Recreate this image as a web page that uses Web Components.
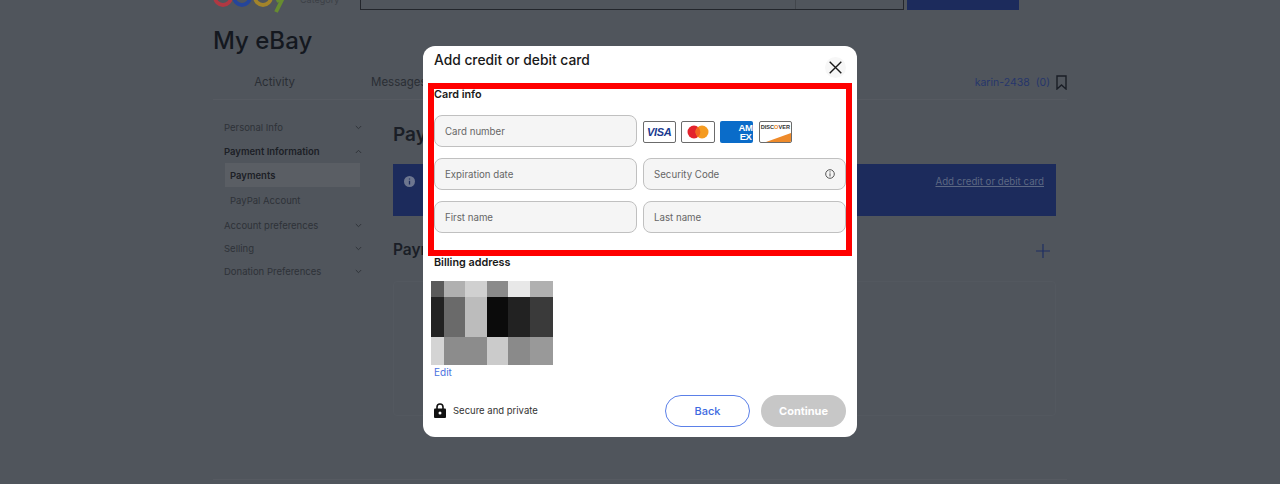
<!DOCTYPE html>
<html>
<head>
<meta charset="utf-8">
<title>My eBay</title>
<style>
  html, body { margin: 0; padding: 0; height: 484px; overflow: hidden; background: #50555c; }
  body { font-family: Inter, "Liberation Sans", sans-serif; }
</style>
</head>
<body>
<my-page>
  <side-nav></side-nav>
</my-page>
<card-modal></card-modal>

<script>
class SideNav extends HTMLElement {
  constructor () {
    super()
    this.attachShadow({mode: 'open'})
  }

  connectedCallback () { this.render() }

  render () {
    const chev = (up) => `<svg width="7" height="5" viewBox="0 0 7 5"><path d="${up ? 'M.8 4 3.5 1.3 6.2 4' : 'M.8 1 3.5 3.7 6.2 1'}" fill="none" stroke="#30343a" stroke-width="1"/></svg>`
    const row = (text, cls, up) => `<div class="row ${cls}"><span>${text}</span>${chev(up)}</div>`
    this.shadowRoot.innerHTML = `<style>
      :host { display: block; width: 137px; font-size: 9.5px; color: #2e3238; }
      .row { display: flex; justify-content: space-between; align-items: center; height: 23.5px; }
      .row svg { margin-right: -1px; }
      .short { height: 23px; }
      .bold { font-weight: 600; color: #1c2026; }
      .sub { height: 24px; padding-left: 5px; margin-left: 1px; margin-right: 1px; display: flex; align-items: center; }
      .on { background: #5a5e64; font-weight: 600; color: #1c2026; margin-bottom: 1px; }
      .last { margin-bottom: 1.5px; }
    </style>
    ${row('Personal Info', '', false)}
    ${row('Payment Information', 'bold', true)}
    <div class="sub on">Payments</div>
    <div class="sub last">PayPal Account</div>
    ${row('Account preferences', '', false)}
    ${row('Selling', 'short', false)}
    ${row('Donation Preferences', 'short', false)}`
  }
}

class MyPage extends HTMLElement {
  constructor () {
    super()
    this.attachShadow({mode: 'open'})
  }

  connectedCallback () { this.render() }

  render () {
    this.shadowRoot.innerHTML = `<style>
      :host { display: block; width: 854px; margin-left: 213px; color: #1a1e26; }
      .top { display: flex; height: 10px; }
      .logo { width: 76px; height: 13px; overflow: hidden; flex: none; }
      .logo svg { display: block; margin-top: -19px; }
      .cat { width: 71px; height: 10px; flex: none; font-size: 9px; line-height: 10px; color: #3c4046; margin-top: -5px; padding-left: 11px; box-sizing: border-box; }
      .search { width: 544px; height: 10px; box-sizing: border-box; border: 1.5px solid #23262c; border-top: 0; flex: none; display: flex; justify-content: flex-end; }
      .search i { width: 107px; border-left: 1px solid #42464c; }
      .go { width: 112px; height: 10px; background: #1c2b5c; margin-left: 3px; flex: none; }
      h1 { margin: 16px 0 0; font-size: 24px; line-height: 30px; font-weight: 500; color: #14181f; }
      .tabs { display: flex; align-items: center; height: 32px; box-sizing: content-box; margin-top: 10px; padding-bottom: 1px; font-size: 11.5px; color: #2a2e34; border-bottom: 1px solid #565a61; }
      .tabs .a { width: 123px; text-align: center; }
      .tabs .m { margin-left: 35px; }
      .tabs .user { margin-left: auto; color: #26366b; font-size: 10.5px; display: flex; align-items: center; gap: 6px; }
      .body { display: flex; margin-top: 16px; }
      .nav { margin-left: 11px; width: 149px; flex: none; }
      .main { flex: 1; min-width: 0; margin-left: 20px; margin-right: 11px; }
      h2 { margin: 7px 0 0; font-size: 19px; line-height: 24px; font-weight: 600; color: #1a1e26; }
      .banner { height: 52px; margin-top: 17px; background: #1c2b5c; display: flex; justify-content: space-between; padding: 12px 12px 0 11px; box-sizing: border-box; font-size: 9.7px; color: #5d6883; }
      .banner u { line-height: 12px; }
      .head { display: flex; justify-content: space-between; align-items: center; margin-top: 22px; }
      .head h2 { margin: 0; font-size: 15.5px; }
      .head svg { margin: 2px 6px 0 0; }
      .list { height: 133px; margin-top: 19px; border: 1px solid #53585f; border-radius: 4px; }
      .foot { border-top: 1px solid #565a61; margin-top: 63px; }
    </style>
    <div class="top">
      <div class="logo"><svg width="76" height="32" viewBox="0 0 76 32"><g fill="none" stroke-width="3.8"><circle cx="10" cy="16" r="8" stroke="#b03842"/><circle cx="29" cy="16" r="8" stroke="#25459a"/><circle cx="50" cy="16" r="8" stroke="#a3842a"/><path d="M60 9l6 12M74 9l-11 22" stroke="#678c30"/></g></svg></div>
      <div class="cat">Category</div>
      <div class="search"><i></i></div>
      <div class="go"></div>
    </div>
    <h1>My eBay</h1>
    <div class="tabs">
      <span class="a">Activity</span>
      <span class="m">Messages</span>
      <span class="user">karin-2438 <span>(0)</span>
        <svg width="11" height="15" viewBox="0 0 11 15"><path d="M1 1h9v13L5.5 10 1 14z" fill="none" stroke="#1a1e26" stroke-width="1.4"/></svg>
      </span>
    </div>
    <div class="body">
      <div class="nav"><slot></slot></div>
      <div class="main">
        <h2>Payments</h2>
        <div class="banner">
          <svg width="11" height="11" viewBox="0 0 11 11"><circle cx="5.5" cy="5.5" r="5.5" fill="#6d768f"/><path d="M5.5 2.4v1.2M5.5 4.8v3.8" stroke="#1c2b5c" stroke-width="1.3"/></svg>
          <u>Add credit or debit card</u>
        </div>
        <div class="head"><h2>Payment methods</h2>
          <svg width="14" height="14" viewBox="0 0 14 14"><path d="M7 0v14M0 7h14" stroke="#1f2f63" stroke-width="1.2"/></svg>
        </div>
        <div class="list"></div>
      </div>
    </div>
    <div class="foot"></div>`
  }
}

class PayCards extends HTMLElement {
  constructor () {
    super()
    this.attachShadow({mode: 'open'})
  }

  connectedCallback () { this.render() }

  render () {
    this.shadowRoot.innerHTML = `<style>
      :host { display: flex; align-items: center; gap: 5.2px; margin: 1px 0 0 -.5px; }
      .c { width: 33.5px; height: 22px; flex: none; box-sizing: border-box; border: 1.5px solid #6b6b6b; border-radius: 2px; background: #fff; display: flex; align-items: center; justify-content: center; font-family: "Liberation Sans", sans-serif; }
      svg { display: block; }
      .visa { font-size: 11px; font-weight: 700; font-style: italic; color: #1a3a8f; letter-spacing: -.3px; }
      .amex { border: 0; background: #0a6cc9; color: #fff; font-size: 9.5px; line-height: 9px; font-weight: 700; letter-spacing: -.5px; justify-content: flex-end; padding-right: 1px; text-align: center; }
      .disc { display: block; position: relative; overflow: hidden; font-size: 5.6px; font-weight: 700; color: #333; text-align: center; line-height: 11px; }
      .disc b { color: #ee8a2a; }
      .disc svg { position: absolute; left: 0; bottom: 0; }
    </style>
    <div class="c visa">VISA</div>
    <div class="c"><svg width="22" height="14" viewBox="0 0 22 14"><circle cx="7" cy="7" r="6.5" fill="#e3222c"/><circle cx="15" cy="7" r="6.5" fill="#f59b20"/><path d="M11 2a6.5 6.5 0 0 1 0 10 6.5 6.5 0 0 1 0-10z" fill="#f2641f"/></svg></div>
    <div class="c amex"><span>AM<br>EX</span></div>
    <div class="c disc">DISC<b>O</b>VER<svg width="31" height="9" viewBox="0 0 31 9"><path d="M31 0v9H6z" fill="#ee8a2a"/></svg></div>`
  }
}

class FormField extends HTMLElement {
  constructor () {
    super()
    this.attachShadow({mode: 'open'})
  }

  connectedCallback () { this.render() }

  render () {
    const info = this.hasAttribute('info')
      ? `<svg width="10" height="10" viewBox="0 0 10 10"><circle cx="5" cy="5" r="4.3" fill="none" stroke="#555" stroke-width="1"/><path d="M5 2.3v1.2M5 4.3v3.2" stroke="#555" stroke-width="1"/></svg>`
      : ''
    this.shadowRoot.innerHTML = `<style>
      :host { display: flex; align-items: center; justify-content: space-between; height: 32px; box-sizing: border-box; padding: 0 10px; background: #f5f5f5; border: 1.5px solid #c0c0c0; border-radius: 8px; font-size: 9.7px; color: #666; }
      span { padding-top: .6px; }
    </style><span><slot></slot></span>${info}`
  }
}

class CardModal extends HTMLElement {
  constructor () {
    super()
    this.attachShadow({mode: 'open'})
  }

  connectedCallback () { this.render() }

  render () {
    const blur = ['#5a5a5a','#b0b0b0','#d0d0d0','#8a8a8a','#e8e8e8','#b0b0b0',
      '#222222','#6a6a6a','#bcbcbc','#0b0b0b','#222222','#3a3a3a',
      '#d4d4d4','#8c8c8c','#8c8c8c','#cbcbcb','#8a8a8a','#999999']
      .map(c => `<i style="background:${c}"></i>`).join('')
    this.shadowRoot.innerHTML = `<style>
      :host { position: fixed; left: 423px; top: 46px; width: 434px; height: 391px; box-sizing: border-box; padding: 0 11px; background: #fff; border-radius: 12px; color: #191919; font-size: 11px; }
      .head { display: flex; justify-content: space-between; height: 37px; }
      h2 { margin: 6px 0 0; font-size: 13.8px; line-height: 17px; font-weight: 500; }
      .x { width: 21px; height: 21px; margin-top: 11px; border-radius: 50%; background: #f7f7f7; display: flex; align-items: center; justify-content: center; }
      h3 { margin: 0; font-size: 10.8px; line-height: 14px; font-weight: 600; }
      .grid { display: grid; grid-template-columns: 1fr 1fr; gap: 11px 6px; margin-top: 13px; }
      .blur { display: grid; grid-template-columns: 12.7px 21.3px 21.7px 21.3px 21.7px 23px; grid-template-rows: 15.7px 40px 28.3px; width: 122px; height: 84px; margin: 11px 0 0 -3px; }
      .blur i { display: block; }
      .edit { font-size: 10px; line-height: 14px; color: #4a72e0; }
      .foot { display: flex; align-items: center; margin-top: 16px; height: 32px; font-size: 9.5px; color: #333; }
      .foot svg { margin: 0 7px 1px 0; }
      .foot span { margin-bottom: 2px; }
      .btn { width: 85px; height: 32px; box-sizing: border-box; border-radius: 16px; display: flex; align-items: center; justify-content: center; font-size: 11px; font-weight: 500; }
      .back { margin-left: auto; border: 1px solid #5b80e8; color: #3e6ae1; }
      .cont { margin-left: 11px; background: #c7c7c7; color: #fff; font-weight: 700; }
      .mark { position: absolute; left: 5px; top: 37px; width: 424px; height: 173px; box-sizing: border-box; border: 6px solid #f00; pointer-events: none; }
    </style>
    <div class="head">
      <h2>Add credit or debit card</h2>
      <div class="x"><svg width="13" height="13" viewBox="0 0 13 13"><path d="M.7.7l11.6 11.6M12.3.7.7 12.3" stroke="#191919" stroke-width="1.4" fill="none"/></svg></div>
    </div>
    <h3 style="margin-top:5px">Card info</h3>
    <div class="grid">
      <form-field>Card number</form-field>
      <pay-cards></pay-cards>
      <form-field>Expiration date</form-field>
      <form-field info>Security Code</form-field>
      <form-field>First name</form-field>
      <form-field>Last name</form-field>
    </div>
    <h3 style="margin-top:23px">Billing address</h3>
    <div class="blur">${blur}</div>
    <div class="edit">Edit</div>
    <div class="foot">
      <svg width="12" height="15" viewBox="0 0 12 15"><path d="M3 6.5V4a3 3 0 0 1 6 0V6.5" fill="none" stroke="#111" stroke-width="1.6"/><rect y="5.5" width="12" height="9.5" rx="1" fill="#111"/><circle cx="6" cy="10" r="1.5" fill="#fff"/></svg>
      <span>Secure and private</span>
      <div class="btn back">Back</div>
      <div class="btn cont">Continue</div>
    </div>
    <div class="mark"></div>`
  }
}

customElements.define('side-nav', SideNav)
customElements.define('my-page', MyPage)
customElements.define('pay-cards', PayCards)
customElements.define('form-field', FormField)
customElements.define('card-modal', CardModal)
</script>
</body>
</html>
